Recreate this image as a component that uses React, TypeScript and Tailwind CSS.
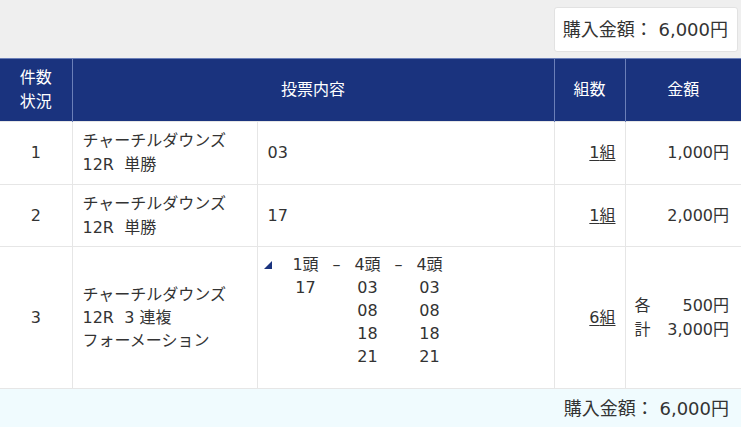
import React from 'react';

const font = { fontFamily: '"DejaVu Sans", "Noto Sans CJK JP", sans-serif' };

const Triangle = () => (
  <svg width="8" height="8" viewBox="0 0 8 8" className="inline-block">
    <polygon points="8,0 8,8 0,8" fill="#1a337e" />
  </svg>
);

const Kumi = ({ n }: { n: string }) => (
  <span className="underline underline-offset-2">{n}組</span>
);

const App = () => {
  const td = 'border border-[#e6e6e6] align-middle';
  return (
    <div className="w-[741px] h-[427px] overflow-hidden bg-white text-[16px] text-[#333]" style={font}>
      <div className="flex h-[58px] items-start justify-end bg-[#efefef] pt-[7px] pr-[3px]">
        <div className="flex h-[45px] w-[184px] items-center justify-end rounded-[3px] border border-[#e2e2e2] bg-white pr-[9px] text-[18px]">
          購入金額：&nbsp;6,000円
        </div>
      </div>
      <table className="w-[741px] table-fixed border-collapse">
        <colgroup>
          <col className="w-[72px]" />
          <col className="w-[185px]" />
          <col className="w-[297px]" />
          <col className="w-[71px]" />
          <col className="w-[116px]" />
        </colgroup>
        <thead>
          <tr className="h-[63px] bg-[#1a337e] text-white">
            <th className="border-t border-r border-[#6b7fb8] font-normal leading-[24px]">
              件数
              <br />
              状況
            </th>
            <th colSpan={2} className="border-t border-r border-[#6b7fb8] font-normal">
              投票内容
            </th>
            <th className="border-t border-r border-[#6b7fb8] font-normal">組数</th>
            <th className="border-t border-[#6b7fb8] font-normal">金額</th>
          </tr>
        </thead>
        <tbody>
          <tr className="h-[63px]">
            <td className={`${td} border-l-0 text-center`}>1</td>
            <td className={`${td} pl-[10px] leading-[24px]`}>
              チャーチルダウンズ
              <br />
              12R&nbsp; 単勝
            </td>
            <td className={`${td} pl-[10px]`}>03</td>
            <td className={`${td} pr-[9px] text-right`}>
              <Kumi n="1" />
            </td>
            <td className={`${td} border-r-0 pr-[12px] text-right`}>1,000円</td>
          </tr>
          <tr className="h-[62px]">
            <td className={`${td} border-l-0 text-center`}>2</td>
            <td className={`${td} pl-[10px] leading-[24px]`}>
              チャーチルダウンズ
              <br />
              12R&nbsp; 単勝
            </td>
            <td className={`${td} pl-[10px]`}>17</td>
            <td className={`${td} pr-[9px] text-right`}>
              <Kumi n="1" />
            </td>
            <td className={`${td} border-r-0 pr-[12px] text-right`}>2,000円</td>
          </tr>
          <tr className="h-[142px]">
            <td className={`${td} border-l-0 text-center`}>3</td>
            <td className={`${td} pl-[10px] leading-[23px]`}>
              チャーチルダウンズ
              <br />
              12R&nbsp; 3 連複
              <br />
              フォーメーション
            </td>
            <td className={`${td} pl-[6px] align-top pt-[6px]`}>
              <div className="grid grid-cols-[22px_40px_22px_40px_22px_40px] leading-[23px]">
                <div className="flex items-center">
                  <Triangle />
                </div>
                <div className="text-center">1頭</div>
                <div className="text-center">–</div>
                <div className="text-center">4頭</div>
                <div className="text-center">–</div>
                <div className="text-center">4頭</div>
                {[
                  ['17', '03', '03'],
                  ['', '08', '08'],
                  ['', '18', '18'],
                  ['', '21', '21'],
                ].map((r, i) => (
                  <React.Fragment key={i}>
                    <div />
                    <div className="text-center">{r[0]}</div>
                    <div />
                    <div className="text-center">{r[1]}</div>
                    <div />
                    <div className="text-center">{r[2]}</div>
                  </React.Fragment>
                ))}
              </div>
            </td>
            <td className={`${td} pr-[9px] text-right`}>
              <Kumi n="6" />
            </td>
            <td className={`${td} border-r-0 pl-[9px] pr-[12px] leading-[24px]`}>
              <div className="flex justify-between">
                <span>各</span>
                <span>500円</span>
              </div>
              <div className="flex justify-between">
                <span>計</span>
                <span>3,000円</span>
              </div>
            </td>
          </tr>
          <tr className="h-[39px] bg-[#f0fbfe]">
            <td colSpan={5} className="border-t border-[#e6e6e6] pr-[12px] text-right text-[18px]">
              購入金額：&nbsp;6,000円
            </td>
          </tr>
        </tbody>
      </table>
    </div>
  );
};

export default App;
